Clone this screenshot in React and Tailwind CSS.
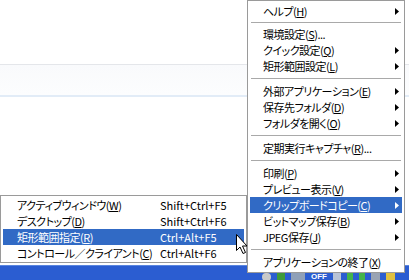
const MAIN_ITEMS = [
  { label: 'ヘルプ', mnemonic: 'H', arrow: true },
  { separator: 'small' },
  { label: '環境設定', mnemonic: 'S', suffix: '...' },
  { label: 'クイック設定', mnemonic: 'Q', arrow: true },
  { label: '矩形範囲設定', mnemonic: 'L', arrow: true },
  { separator: 'normal' },
  { label: '外部アプリケーション', mnemonic: 'E', arrow: true },
  { label: '保存先フォルダ', mnemonic: 'D', arrow: true },
  { label: 'フォルダを開く', mnemonic: 'O', arrow: true },
  { separator: 'normal' },
  { label: '定期実行キャプチャ', mnemonic: 'R', suffix: '...' },
  { separator: 'normal' },
  { label: '印刷', mnemonic: 'P', arrow: true },
  { label: 'プレビュー表示', mnemonic: 'V', arrow: true },
  { label: 'クリップボードコピー', mnemonic: 'C', arrow: true, active: true },
  { label: 'ビットマップ保存', mnemonic: 'B', arrow: true },
  { label: 'JPEG保存', mnemonic: 'J', arrow: true },
  { separator: 'normal' },
  { label: 'アプリケーションの終了', mnemonic: 'X' },
]

const SUB_ITEMS = [
  { label: 'アクティブウィンドウ', mnemonic: 'W', shortcut: 'Shift+Ctrl+F5' },
  { label: 'デスクトップ', mnemonic: 'D', shortcut: 'Shift+Ctrl+F6' },
  { label: '矩形範囲指定', mnemonic: 'R', shortcut: 'Ctrl+Alt+F5', active: true },
  { label: 'コントロール／クライアント', mnemonic: 'C', shortcut: 'Ctrl+Alt+F6' },
]

const menuFont =
  "font-['Noto_Sans_CJK_JP','Noto_Sans',sans-serif] text-[11px] leading-[16px] [font-feature-settings:'palt']"

function Label({ item }) {
  return (
    <span className="tracking-[-0.5px] whitespace-nowrap">
      {item.label}(<u className="underline-offset-1">{item.mnemonic}</u>){item.suffix}
    </span>
  )
}

function SubArrow({ light }) {
  return (
    <svg width="4" height="7" viewBox="0 0 4 7" className="shrink-0">
      <path d="M0 0 L4 3.5 L0 7 Z" fill={light ? '#ffffff' : '#000000'} />
    </svg>
  )
}

function MainMenu() {
  return (
    <div
      className={`absolute top-0 left-[247px] w-[158px] border border-[#9a9a9a] bg-white p-[2px] ${menuFont}`}
    >
      {MAIN_ITEMS.map((item, index) =>
        item.separator ? (
          <div
            key={index}
            className={`${item.separator === 'small' ? 'my-[3px]' : 'my-[4px]'} mx-px h-px bg-[#a9a9a9]`}
          />
        ) : (
          <div
            key={index}
            className={`flex h-4 items-center justify-between pr-[3px] pl-[13px] ${
              item.active ? 'bg-[#316ac5] text-white' : 'text-black'
            }`}
          >
            <Label item={item} />
            {item.arrow && <SubArrow light={item.active} />}
          </div>
        ),
      )}
    </div>
  )
}

function SubMenu() {
  return (
    <div
      className={`absolute top-[195px] left-0 w-[247px] border border-[#9a9a9a] bg-white px-[2px] py-px ${menuFont}`}
    >
      {SUB_ITEMS.map((item) => (
        <div
          key={item.label}
          className={`grid h-4 grid-cols-[143px_1fr] items-center pl-[14px] ${
            item.active ? 'bg-[#316ac5] text-white' : 'text-black'
          }`}
        >
          <Label item={item} />
          <span className="whitespace-nowrap">{item.shortcut}</span>
        </div>
      ))}
    </div>
  )
}

function Cursor() {
  return (
    <svg
      width="13"
      height="22"
      viewBox="0 0 13 22"
      className="absolute top-[233px] left-[235px]"
    >
      <path
        d="M1.5 1.5 L1.5 17.5 L5 14 L8 20.5 L10.5 19.5 L7.5 13 L12 13 Z"
        fill="#ffffff"
        stroke="#000000"
        strokeWidth="1"
        strokeLinejoin="miter"
      />
    </svg>
  )
}

function TrayIcons() {
  return (
    <div className="flex items-center gap-[6px] pt-[7px] pl-[262px]">
      <span className="h-[8px] w-[9px] rounded-sm bg-[#c9c9c9]" />
      <span className="h-[8px] w-[8px] bg-[#3e9a3a]" />
      <span className="h-[8px] w-[14px] bg-[#8fa0b8]" />
      <span className="font-['Liberation_Sans',sans-serif] text-[8px] leading-[8px] font-bold text-white">OFF</span>
      <span className="h-[8px] w-[8px] bg-[#b8c3d6]" />
      <span className="h-[8px] w-[6px] bg-[#44b44a]" />
      <span className="h-[8px] w-[6px] bg-[#44b44a]" />
      <span className="h-[8px] w-[9px] bg-[#9aa4b4]" />
      <span className="h-[8px] w-[9px] bg-[#e0c040]" />
    </div>
  )
}

export default function App() {
  return (
    <div className="relative flex h-[280px] w-[409px] flex-col overflow-hidden bg-white">
      <div className="h-[64px] shrink-0 bg-white" />
      <div className="h-[31px] shrink-0 border-t border-[#e4e6ea] bg-linear-to-b from-[#f9fafc] to-[#fcfdfe]" />
      <div className="h-[2px] shrink-0 bg-[#e2ecf7]" />
      <div className="flex-1 bg-white" />
      <div className="h-[15px] shrink-0 border-t border-[#5a86e0] bg-[#2b5dd1]">
        <TrayIcons />
      </div>

      <MainMenu />
      <SubMenu />
      <Cursor />
    </div>
  )
}
